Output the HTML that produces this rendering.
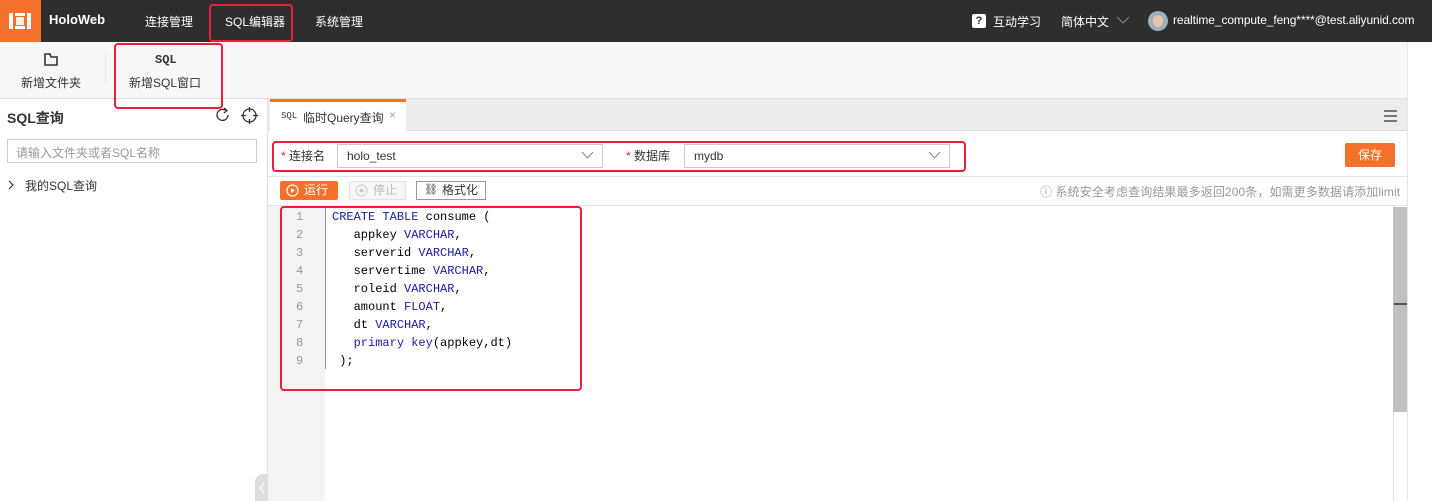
<!DOCTYPE html>
<html><head><meta charset="utf-8"><style>
*{margin:0;padding:0;box-sizing:border-box}
body{width:1432px;height:501px;overflow:hidden;background:#fff;font-family:"Liberation Sans","Noto Sans CJK SC",sans-serif;font-size:12px;color:#333;position:relative}
.a{position:absolute}
.red{position:absolute;border:2px solid #e8203a;border-radius:4px}
.mono{font-family:"Liberation Mono","DejaVu Sans Mono",monospace;font-size:12px}
.kw{color:#1a1aa6}
.nav{color:#fff;font-size:12px;top:13px}
</style></head><body>
<!-- top bar -->
<div class="a" style="left:0;top:0;width:1432px;height:42px;background:#2e2e2e"></div>
<div class="a" style="left:0;top:0;width:41px;height:42px;background:#f5712a"></div>
<svg class="a" style="left:9px;top:11px" width="22" height="20" viewBox="0 0 22 20"><rect x="0" y="2" width="4" height="16" fill="#fff"/><rect x="6" y="2" width="10" height="3" fill="#fff"/><rect x="6" y="15" width="10" height="3" fill="#fff"/><rect x="7" y="6" width="8" height="8" fill="#fff" opacity=".9"/><rect x="18" y="2" width="4" height="16" fill="#fff"/></svg>
<div class="a" style="left:49px;top:12px;color:#fff;font-weight:bold;font-size:13px">HoloWeb</div>
<div class="a nav" style="left:145px">连接管理</div>
<div class="a nav" style="left:225px">SQL编辑器</div>
<div class="a nav" style="left:315px">系统管理</div>
<div class="red" style="left:209px;top:4px;width:84px;height:38px"></div>
<div class="a" style="left:972px;top:14px;width:14px;height:14px;background:#fff;border-radius:2px;color:#2e2e2e;font-size:11px;font-weight:bold;text-align:center;line-height:14px">?</div>
<div class="a nav" style="left:993px">互动学习</div>
<div class="a nav" style="left:1061px">简体中文</div>
<svg class="a" style="left:1116px;top:15px" width="14" height="10"><path d="M1 2 L7 8 L13 2" stroke="#888" fill="none"/></svg>
<div class="a" style="left:1148px;top:11px;width:20px;height:20px;border-radius:50%;background:#9bb0c0"><div style="margin:4px 5px;width:10px;height:12px;border-radius:5px;background:#e8c4a8"></div></div>
<div class="a nav" style="left:1173px;letter-spacing:-0.1px">realtime_compute_feng****@test.aliyunid.com</div>
<!-- toolbar -->
<div class="a" style="left:0;top:42px;width:1407px;height:57px;background:#f7f7f7;border-bottom:1px solid #e0e0e0"></div>
<div class="a" style="left:1407px;top:42px;width:1px;height:459px;background:#e6e6e6"></div>
<svg class="a" style="left:44px;top:53px" width="14" height="13"><path d="M1 1 H6 L7 4 H13 V12 H1 Z" fill="none" stroke="#333" stroke-width="1.6"/></svg>
<div class="a" style="left:21px;top:74px;font-size:12px">新增文件夹</div>
<div class="a" style="left:105px;top:55px;width:1px;height:28px;background:#e4e4e4"></div>
<div class="a" style="left:155px;top:53px;font-weight:bold;font-size:12px;font-family:'Liberation Mono',monospace">SQL</div>
<div class="a" style="left:129px;top:74px;font-size:12px">新增SQL窗口</div>
<div class="red" style="left:114px;top:43px;width:109px;height:66px"></div>
<!-- left panel -->
<div class="a" style="left:267px;top:99px;width:1px;height:402px;background:#e0e0e0"></div>
<div class="a" style="left:7px;top:108px;font-weight:bold;font-size:14px">SQL查询</div>
<svg class="a" style="left:215px;top:107px" width="16" height="16"><path d="M13 8 A5.5 5.5 0 1 1 10.5 3.3" fill="none" stroke="#333" stroke-width="1.3"/><path d="M9 1 L12 3.5 L9 6" fill="none" stroke="#333" stroke-width="1.3"/></svg>
<svg class="a" style="left:241px;top:107px" width="17" height="17"><circle cx="8.5" cy="8.5" r="6.5" fill="none" stroke="#333" stroke-width="1.3"/><path d="M8.5 0 V5 M8.5 12 V17 M0 8.5 H5 M12 8.5 H17" stroke="#333" stroke-width="1.3"/></svg>
<div class="a" style="left:7px;top:139px;width:250px;height:24px;border:1px solid #ccc;background:#fff;padding:4px 8px;color:#999;font-size:12px">请输入文件夹或者SQL名称</div>
<svg class="a" style="left:8px;top:180px" width="8" height="10"><path d="M1 1 L5 5 L1 9" fill="none" stroke="#333" stroke-width="1.2"/></svg>
<div class="a" style="left:25px;top:177px;font-size:12px">我的SQL查询</div>
<div class="a" style="left:255px;top:474px;width:13px;height:27px;background:#ddd;border-radius:8px 0 0 0"></div>
<svg class="a" style="left:258px;top:482px" width="8" height="12"><path d="M6 1 L2 6 L6 11" fill="none" stroke="#fff" stroke-width="1.2"/></svg>
<!-- tab bar -->
<div class="a" style="left:268px;top:99px;width:1139px;height:32px;background:#ececec;border-bottom:1px solid #ddd"></div>
<div class="a" style="left:270px;top:99px;width:136px;height:33px;background:#fff;border-top:3px solid #f5712a"></div>
<div class="a mono" style="left:281px;top:111px;font-size:9px">SQL</div>
<div class="a" style="left:303px;top:109px;font-size:12px">临时Query查询</div>
<div class="a" style="left:389px;top:108px;color:#aaa;font-size:12px">×</div>
<svg class="a" style="left:1384px;top:110px" width="13" height="12"><path d="M0 1 H13 M0 6 H13 M0 11 H13" stroke="#333" stroke-width="1.2"/></svg>
<!-- conn row -->
<div class="a" style="left:268px;top:176px;width:1139px;height:1px;background:#e4e4e4"></div>
<div class="a" style="left:281px;top:147px;font-size:12px"><span style="color:#e8203a">*</span> 连接名</div>
<div class="a" style="left:337px;top:144px;width:266px;height:24px;border:1px solid #ccc;padding:4px 9px;font-size:12px">holo_test</div>
<svg class="a" style="left:581px;top:151px" width="13" height="8"><path d="M1 1 L6.5 7 L12 1" fill="none" stroke="#888"/></svg>
<div class="a" style="left:626px;top:147px;font-size:12px"><span style="color:#e8203a">*</span> 数据库</div>
<div class="a" style="left:684px;top:144px;width:266px;height:24px;border:1px solid #ccc;padding:4px 9px;font-size:12px">mydb</div>
<svg class="a" style="left:928px;top:151px" width="13" height="8"><path d="M1 1 L6.5 7 L12 1" fill="none" stroke="#888"/></svg>
<div class="red" style="left:272px;top:141px;width:694px;height:31px"></div>
<div class="a" style="left:1345px;top:143px;width:50px;height:24px;background:#f5712a;border-radius:2px;color:#fff;text-align:center;line-height:24px;font-size:12px">保存</div>
<!-- buttons row -->
<div class="a" style="left:280px;top:181px;width:58px;height:19px;background:#f5712a;border-radius:2px;color:#fff;font-size:12px;line-height:19px;padding-left:24px">运行</div>
<svg class="a" style="left:286px;top:184px" width="13" height="13"><circle cx="6.5" cy="6.5" r="5.5" fill="none" stroke="#fff" stroke-width="1.2"/><path d="M5 4 L9 6.5 L5 9Z" fill="#fff"/></svg>
<div class="a" style="left:349px;top:181px;width:57px;height:19px;border:1px solid #e4e4e4;background:#f7f7f7;color:#bbb;font-size:12px;line-height:17px;padding-left:23px">停止</div>
<svg class="a" style="left:355px;top:184px" width="13" height="13"><circle cx="6.5" cy="6.5" r="5.5" fill="none" stroke="#ccc"/><circle cx="6.5" cy="6.5" r="2" fill="#ccc"/></svg>
<div class="a" style="left:416px;top:181px;width:70px;height:19px;border:1px solid #999;background:#fff;font-size:12px;line-height:17px;padding-left:25px">格式化</div>
<div class="a" style="left:424px;top:183px;font-size:11px">⛓</div>
<div class="a" style="left:1040px;top:183px;color:#999;font-size:12px;letter-spacing:0.1px">ⓘ 系统安全考虑查询结果最多返回200条，如需更多数据请添加limit</div>
<div class="a" style="left:268px;top:205px;width:1139px;height:1px;background:#e4e4e4"></div>
<!-- editor -->
<div class="a" style="left:268px;top:206px;width:57px;height:295px;background:#f3f3f3"></div>
<div class="a" style="left:325px;top:206px;width:1px;height:163px;background:#999"></div>
<div class="a mono" style="left:296px;top:208px;line-height:18px;color:#999;text-align:right">1<br>2<br>3<br>4<br>5<br>6<br>7<br>8<br>9</div>
<pre class="a mono" style="left:332px;top:208px;line-height:18px;color:#000">
<span class="kw">CREATE</span> <span class="kw">TABLE</span> consume (
   appkey <span class="kw">VARCHAR</span>,
   serverid <span class="kw">VARCHAR</span>,
   servertime <span class="kw">VARCHAR</span>,
   roleid <span class="kw">VARCHAR</span>,
   amount <span class="kw">FLOAT</span>,
   dt <span class="kw">VARCHAR</span>,
   <span class="kw">primary</span> <span class="kw">key</span>(appkey,dt)
 );</pre>
<div class="red" style="left:280px;top:206px;width:302px;height:185px"></div>
<div class="a" style="left:1393px;top:206px;width:1px;height:295px;background:#ddd"></div>
<div class="a" style="left:1393px;top:207px;width:14px;height:205px;background:#c0c0c0"></div>
<div class="a" style="left:1394px;top:303px;width:13px;height:2px;background:#555"></div>
</body></html>
